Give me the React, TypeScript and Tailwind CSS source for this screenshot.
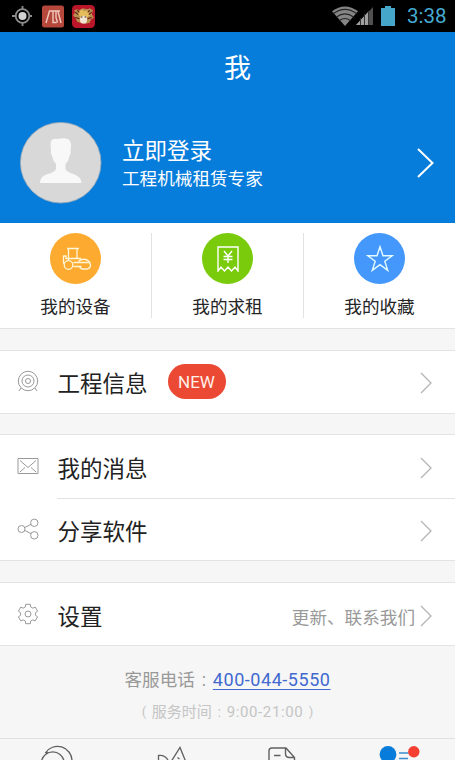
import type { ReactNode } from "react";
import clsx from "clsx";

const Chevron = ({ className }: { className?: string }) => (
	<svg viewBox="0 0 12 22" className={clsx("h-[22px] w-3 shrink-0", className)} fill="none" stroke="currentColor" strokeWidth="1.3">
		<path d="M1 1l10 10L1 21" />
	</svg>
);

const StatusBar = () => (
	<div className="flex h-8 shrink-0 items-center bg-black pr-2 pl-3">
		<svg viewBox="0 0 20 20" className="h-5 w-5 shrink-0" fill="none" stroke="#8c8c8c" strokeWidth="1.8">
			<circle cx="10.5" cy="10" r="6.8" />
			<circle cx="10.5" cy="10" r="4" fill="#d2d2d2" stroke="none" />
			<path d="M10.5 0v3.5M10.5 16.5V20M0 10h4M17 10h3" />
		</svg>
		<svg viewBox="0 0 22 22" className="ml-2.5 h-[23px] w-[22px] shrink-0" fill="none">
			<rect width="22" height="22" rx="2.5" fill="#b5473b" />
			<path d="M7 5.5h11M7.5 5.5L4 17.5M11 6v11h3.5M14 6v6l1.5 5M16 6l3 11.5" stroke="#efc9bd" strokeWidth="1.4" />
		</svg>
		<svg viewBox="0 0 22 22" className="ml-2 h-[23px] w-[23px] shrink-0">
			<rect width="22" height="22" rx="4" fill="#b9162a" />
			<path d="M2 5l3-1 2 1 3-2 5 1 2-1 3 2-1 4 2 3-3 2-1 3-4 1-5-1-3-1-2-4-2-2 2-3z" fill="#b98f50" />
			<path d="M6 8l3-4 3 2 4-1 1 5-3 2H8z" fill="#e5bc5c" />
			<ellipse cx="11" cy="14" rx="3.4" ry="3.8" fill="#f1e5d3" />
			<path d="M3 7l3 2M16 9l3-2M3 12l4 1M15 13l4-1M5 5l2 2M17 5l-2 2" stroke="#63251d" strokeWidth="1.1" />
			<path d="M8.5 11.5h1.5M12 11.5h1.5" stroke="#43251d" />
		</svg>
		<div className="ml-auto flex items-center">
			<svg viewBox="0 0 26 20" className="-mr-0.5 h-5 w-[26px]">
				<path d="M0 5.2Q13-4.2 26 5.2L13 20z" fill="#858585" />
				<path d="M1.5 7.5Q13-.8 24.5 7.5M4.5 11Q13 4.8 21.5 11M7.5 14.5Q13 10.5 18.5 14.5" fill="none" stroke="#252525" strokeWidth="1.1" />
			</svg>
			<svg viewBox="0 0 18 20" className="h-5 w-[18px]">
				<path d="M0 19L17 1v18z" fill="#505050" />
				<path d="M0 19L12 6v13z" fill="#a0a0a0" />
				<path d="M4.5 12v7M8.5 8v11M12.5 5v14" stroke="#333" />
			</svg>
			<svg viewBox="0 0 14 20" className="ml-[7px] h-5 w-3.5">
				<path d="M4 0h6v2h4v18H0V2h4z" fill="#45a6ca" />
			</svg>
			<span className="ml-3 w-10 text-[20.5px] leading-8 whitespace-nowrap text-[#45acd2]">3:38</span>
		</div>
	</div>
);

const Profile = () => (
	<header className="h-[191px] shrink-0 bg-[#067cdb] text-white">
		<h1 className="h-[90px] pt-[17px] pl-5 text-center text-[27px] leading-10">我</h1>
		<div className="flex items-center pr-[21px] pl-5">
			<svg viewBox="0 0 82 82" className="h-[82px] w-[82px]">
				<circle cx="40.7" cy="40.7" r="40.3" fill="#d8d8d8" stroke="#9baab6" strokeWidth=".8" />
				<path d="M31 19q2-3 7-2 10-2 12 2 2 4 .5 9 1 3-1 6-1 5-4 8v5q1 3 8 5 8 3 8 9H20q0-7 8-9 7-2 8-5v-5q-3-3-4-8-2-3-1-6-1-5 0-9z" fill="#f8f8f8" />
			</svg>
			<div className="ml-5">
				<div className="text-[22.5px] leading-8">立即登录</div>
				<div className="text-[17.6px] leading-6">工程机械租赁专家</div>
			</div>
			<svg viewBox="0 0 17 30" className="ml-auto h-[30px] w-[17px]" fill="none" stroke="currentColor" strokeWidth="2">
				<path d="M1 1l14.5 14L1 29" />
			</svg>
		</div>
	</header>
);

const Shortcut = ({ label, color, children }: { label: string, color: string, children: ReactNode }) => (
	<div className="flex flex-1 flex-col items-center">
		<div className={clsx("flex h-[51px] w-[51px] shrink-0 items-center justify-center rounded-full", color)}>
			{children}
		</div>
		<div className="mt-[9px] text-[17.6px] leading-7 text-[#252525]">{label}</div>
	</div>
);

const Shortcuts = () => (
	<section className="flex h-[106px] shrink-0 border-b border-[#e3e3e3] bg-white pt-2.5 pb-2.5">
		<Shortcut label="我的设备" color="bg-[#fdab30]">
			<svg viewBox="0 0 30 24" className="ml-0.5 h-6 w-[30px]" fill="none" stroke="#fff5d7" strokeWidth="1.3">
				<path d="M5 1.500h12M6.500 1.500V13M15 1.500V11M2.500 16H1.500V9H4v2.500h15M11.500 15.500h17M11.500 19.500h8" />
				<circle cx="6.500" cy="18" r="4.3" />
				<path d="M16.500 14.500a6.500 5.500 0 0 1 10.500 0M17.500 19.500q1 2.500 3.500 2.500h4.500q3-1 3-4l-1.500-3.500" />
			</svg>
		</Shortcut>
		<div className="h-[85px] w-px bg-[#e2e2e2]" />
		<Shortcut label="我的求租" color="bg-[#7acb0c]">
			<svg viewBox="0 0 22 26" className="h-[26px] w-[22px]" fill="none" stroke="white" strokeWidth="1.4">
				<path d="M1 25V1h20v24l-3-4-3.5 4-3.5-4-3.5 4L4 21z" />
				<path d="M7 5l4 5 4-5M11 10v7M6.5 10.5h9M6.5 13.5h9" />
			</svg>
		</Shortcut>
		<div className="h-[85px] w-px bg-[#e2e2e2]" />
		<Shortcut label="我的收藏" color="bg-[#4598fb]">
			<svg viewBox="0 0 28 28" className="h-7 w-7" fill="none" stroke="#e3fbff" strokeWidth="1.4">
				<path d="M14 1.8l3 9h9.2l-7.4 5.5 2.9 9-7.7-5.6-7.7 5.6 2.9-9-7.4-5.5H11z" />
			</svg>
		</Shortcut>
	</section>
);

const Row = ({ icon, label, hint, children }: { icon: ReactNode, label: string, hint?: string, children?: ReactNode }) => (
	<div className="flex h-[62px] items-center pt-1 pr-[23px] pl-[17px]">
		<svg viewBox="0 0 22 22" className="mb-[7px] h-[22px] w-[22px] shrink-0" fill="none" stroke="#999" strokeWidth="1">
			{icon}
		</svg>
		<div className="ml-[18.5px] text-[22.5px] leading-8 text-[#222]">{label}</div>
		{children}
		<div className="ml-auto flex items-center">
			{hint && <span className="mr-[5px] pt-[3px] text-[17.6px] text-[#999]">{hint}</span>}
			<Chevron className="mb-0.5 text-[#b4b4b4]" />
		</div>
	</div>
);

const targetIcon = (
	<>
		<circle cx="11" cy="11" r="9.7" />
		<circle cx="11" cy="11" r="6" />
		<circle cx="11" cy="11" r="2.5" />
		<path d="M4 18l-2 3M18 18l2 3" />
	</>
);

const mailIcon = <path d="M1 3.5h20v15H1zM3 5.5l8 7 8-7M3 17l5-4.5M19 17l-5-4.5" />;

const shareIcon = (
	<>
		<circle cx="4.5" cy="11" r="3.5" />
		<circle cx="17.3" cy="4.8" r="3.7" />
		<circle cx="17.3" cy="17.3" r="3.7" />
		<path d="M7.7 9.5L14 6.4M7.7 12.4l6.3 3.2" />
	</>
);

const gearIcon = (
	<>
		<path
			d="M8.6 1.3h4.8l.2 2.6 2.25 1.3 2.35-1.1 2.4 4.1-2.15 1.5v2.6l2.15 1.5-2.4 4.1-2.35-1.1-2.25 1.3-.2 2.6H8.6l-.2-2.6-2.25-1.3-2.35 1.1-2.4-4.1 2.15-1.5V9.7L1.4 8.2l2.4-4.1 2.35 1.1L8.4 3.9z"
			strokeLinejoin="round"
		/>
		<circle cx="11" cy="11" r="3" />
	</>
);

const TabBar = () => (
	<nav className="flex h-[22px] shrink-0 border-t border-[#e1e1e1] pl-10">
		<svg viewBox="0 0 36 21" className="h-[21px] w-9" fill="none" stroke="#606060" strokeWidth="1.3">
			<path d="M5.3 14A14.5 14.5 0 0 1 32 22M1.5 22A11.5 11.5 0 0 1 24 22M5.3 14l2.5-.8" />
		</svg>
		<svg viewBox="0 0 36 21" className="ml-[75px] h-[21px] w-9" fill="none" stroke="#606060" strokeWidth="1.3">
			<path d="M43.5 22M7.5 22v-5.500q6-1 9.500 4.500M20.500 22L29 8.500 34.500 22M26.500 18.500l2 1.500" />
		</svg>
		<svg viewBox="0 0 28 21" className="ml-[81px] h-[21px] w-7" fill="none" stroke="#606060" strokeWidth="1.4">
			<path d="M1 22V12q0-3 3-3h14l8.5 9.5v4M17.5 9v5.5q0 4 4 4h5M6 16.5h6.5" />
		</svg>
		<svg viewBox="0 0 41 21" className="ml-[83px] h-[21px] w-[41px]">
			<circle cx="9" cy="15.5" r="8.4" fill="#087cda" />
			<path d="M20 14h9.5M20 19.5h9" stroke="#398ed0" strokeWidth="1.5" />
			<circle cx="34.8" cy="12.8" r="5.7" fill="#f43f32" />
		</svg>
	</nav>
);

export default function App() {
	return (
		<div className="flex h-[760px] w-[455px] flex-col overflow-hidden bg-[#f6f6f6] font-[Roboto,'Noto_Sans_CJK_SC',sans-serif]">
			<StatusBar />
			<Profile />
			<Shortcuts />
			<main className="mt-[21px] flex shrink-0 flex-col">
				<section className="h-16 border-y border-[#e3e3e3] bg-white">
					<Row icon={targetIcon} label="工程信息">
						<span className="mb-[5px] ml-5 flex h-[35px] w-[58px] items-center justify-center rounded-full bg-[#eb4933] pt-0.5 text-[17px] text-[#fff0e9]">NEW</span>
					</Row>
				</section>
				<section className="mt-5 h-[127px] border-y border-[#e3e3e3] bg-white pt-px">
					<Row icon={mailIcon} label="我的消息" />
					<div className="ml-[57px] h-px bg-[#e3e3e3]" />
					<Row icon={shareIcon} label="分享软件" />
				</section>
				<section className="mt-[21px] h-16 border-y border-[#e3e3e3] bg-white pt-px">
					<Row icon={gearIcon} label="设置" hint="更新、联系我们" />
				</section>
			</main>
			<footer className="flex flex-1 flex-col items-center pt-5 whitespace-nowrap">
				<div className="flex text-[17.6px] leading-7 text-[#999]">
					<span>客服电话</span>
					<span className="w-[18px] text-center">:</span>
					<a className="text-[18px] tracking-[0.55px] text-[#4169cf] underline underline-offset-3">400-044-5550</a>
				</div>
				<div className="mt-1.5 flex text-[15px] leading-6 text-[#c5c5c5]">
					<span className="w-2.5 text-[13px]">(</span>
					<span>服务时间</span>
					<span className="w-[15px] text-center">:</span>
					<span className="tracking-[0.6px]">9:00-21:00</span>
					<span className="w-2.5 text-right text-[13px]">)</span>
				</div>
			</footer>
			<TabBar />
		</div>
	);
}
